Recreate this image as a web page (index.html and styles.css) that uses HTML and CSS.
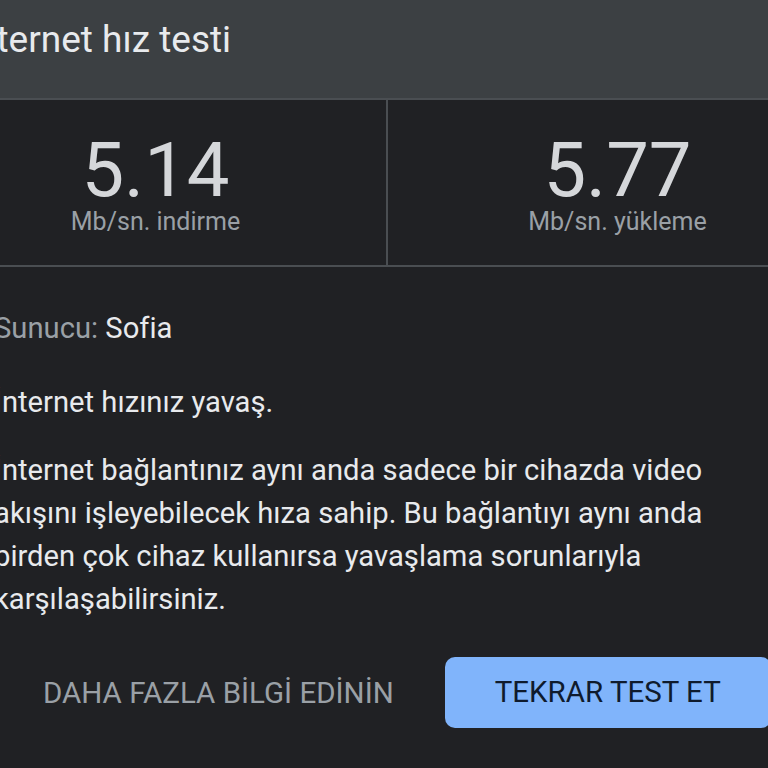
FILE: index.html
```html
<!DOCTYPE html>
<html lang="tr">
<head>
    <meta charset="UTF-8">
    <meta name="viewport" content="width=device-width, initial-scale=1.0">
    <title>İnternet hız testi</title>

    <link rel="stylesheet" href="styles.css">
</head>
<body>

    <div class="page">

        <div class="header">
            <h1 class="title">İnternet hız testi</h1>
        </div>

        <div class="stats">
            <div class="stat">
                <p class="speed">5.14</p>
                <p class="unit">Mb/sn. indirme</p>
            </div>
            <div class="stat">
                <p class="speed">5.77</p>
                <p class="unit">Mb/sn. yükleme</p>
            </div>
        </div>

        <div class="info">
            <p class="server"><span class="label">Sunucu:</span> Sofia</p>
            <p class="verdict">İnternet hızınız yavaş.</p>
            <p class="details">İnternet bağlantınız aynı anda sadece bir cihazda video akışını işleyebilecek hıza sahip. Bu bağlantıyı aynı anda birden çok cihaz kullanırsa yavaşlama sorunlarıyla karşılaşabilirsiniz.</p>
        </div>

        <div class="actions">
            <button class="more">DAHA FAZLA BİLGİ EDİNİN</button>
            <button class="retry">TEKRAR TEST ET</button>
        </div>

    </div>

</body>
</html>
```

FILE: styles.css
```css
* {
    margin: 0;
    padding: 0;
    box-sizing: border-box;
}

body {
    width: 768px;
    height: 768px;
    overflow: hidden;
    background-color: #202124;
    font-family: Roboto, "Noto Sans", sans-serif;
    color: #e8eaed;
}

.page {
    width: 922px;
    margin-left: -75px;
}

.header {
    height: 100px;
    background-color: #3c4043;
    border-bottom: 2px solid #4a4e52;
    padding: 18px 0 0 41px;
}

.title {
    font-size: 37px;
    font-weight: 400;
    line-height: 44px;
    color: #e8eaed;
}

.stats {
    display: grid;
    grid-template-columns: 1fr 1fr;
    height: 167px;
    border-bottom: 2px solid #4a4e52;
}

.stat {
    display: flex;
    flex-direction: column;
    align-items: center;
    padding-top: 32px;
}

.stat + .stat {
    border-left: 2px solid #4a4e52;
}

.speed {
    font-size: 76px;
    line-height: 76px;
    color: #d5d7da;
}

.unit {
    font-size: 25px;
    line-height: 28px;
    color: #9aa0a6;
}

.info {
    padding: 40px 0 0 69px;
    width: 825px;
    font-size: 29.2px;
    line-height: 43px;
}

.label {
    color: #9aa0a6;
}

.verdict {
    margin-top: 31px;
}

.details {
    margin-top: 25px;
}

.actions {
    display: flex;
    align-items: center;
    margin-top: 36px;
    padding-left: 118px;
    gap: 51px;
}

.actions button {
    font-family: Roboto, "Noto Sans", sans-serif;
    font-size: 29.5px;
    border: none;
    cursor: pointer;
}

.more {
    background: none;
    color: #9aa0a6;
}

.retry {
    width: 326px;
    height: 71px;
    border-radius: 10px;
    background-color: #80b4fb;
    color: #0f1b2d;
    line-height: 67px;
}
```
